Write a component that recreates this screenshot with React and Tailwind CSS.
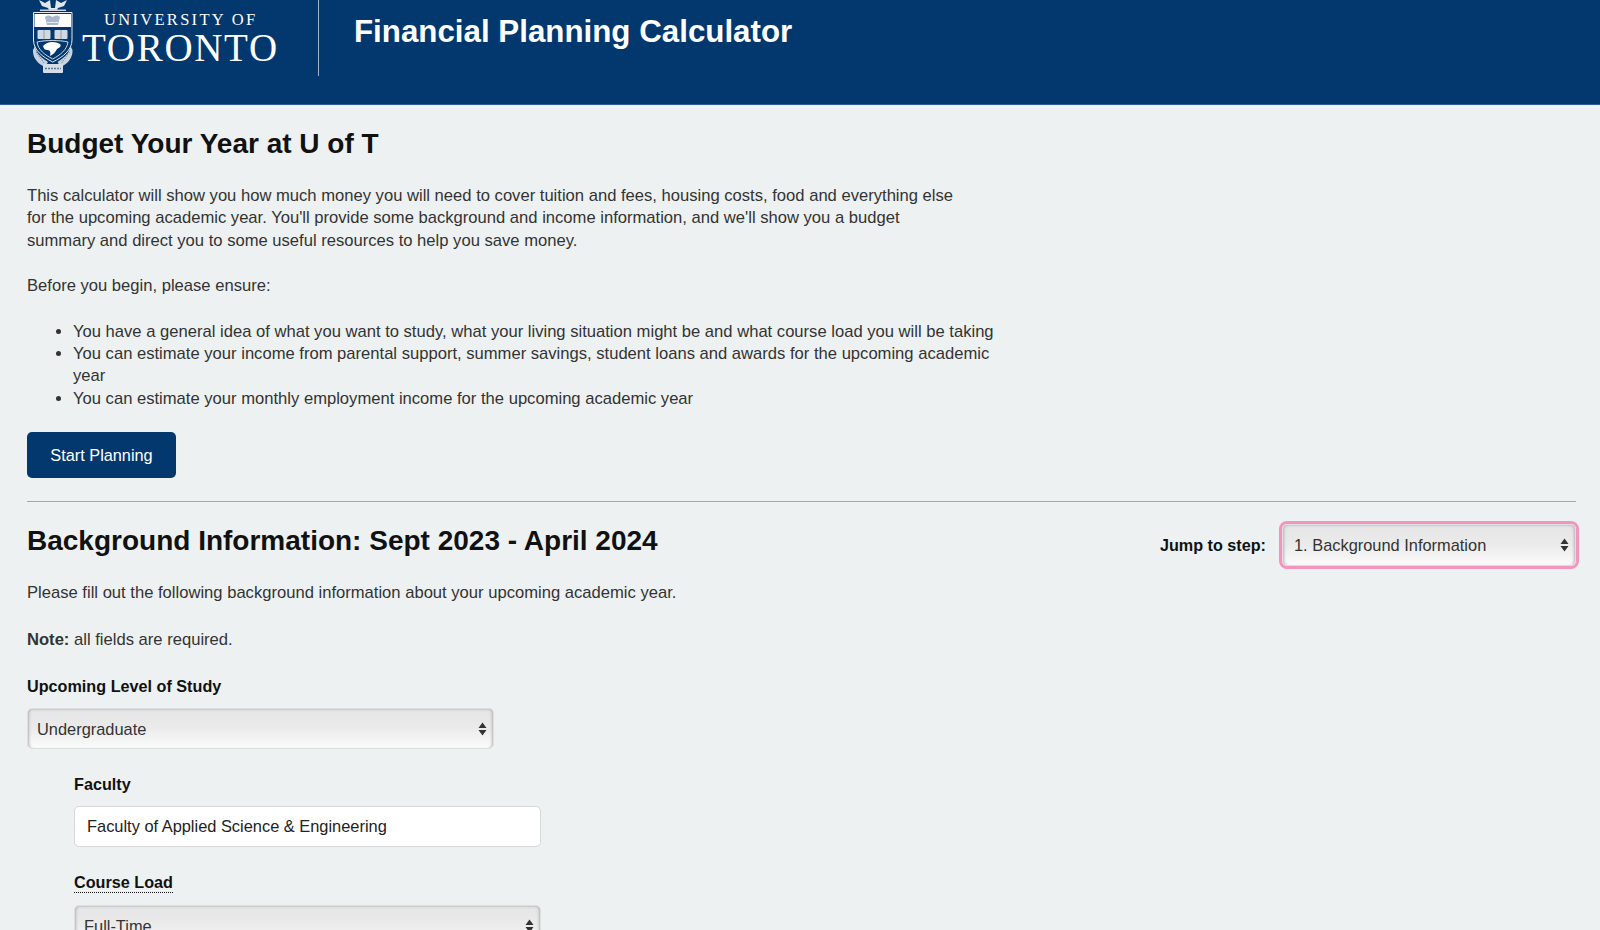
import React from "react";

// U of T crest, simplified
const Crest = () => (
  <svg width="40" height="74" viewBox="0 0 40 74" className="shrink-0">
    {/* tree on top */}
    <path d="M6 0 L12 3 L17 0 L18 8 L22 8 L23 0 L28 3 L34 0 L31 6 L25 8 L24 10 L16 10 L15 8 L9 6 Z" fill="#dfe6ee" />
    <rect x="7" y="9.500" width="26" height="1.500" fill="#c7d2df" />
    {/* shield */}
    <path d="M0.500 12.500 H39 V40 C39 50 30 57 19.750 62 C9.500 57 0.500 50 0.500 40 Z" fill="#03386e" stroke="#e4e9f0" strokeWidth="1" />
    <rect x="1.500" y="14" width="36.500" height="13" fill="#ffffff" />
    {/* crown */}
    <path d="M12 17 C14 15 17 15 19.500 17 C22 15 25 15 27 17 L25 25 H14 Z" fill="#a9b9cb" />
    <path d="M14 22.500 H25" stroke="#ffffff" strokeWidth="0.700" />
    {/* books */}
    <rect x="4.500" y="30" width="13" height="9" rx="1" fill="#cfd8e3" />
    <rect x="21.500" y="30" width="13" height="9" rx="1" fill="#cfd8e3" />
    <path d="M11 30 V39 M28 30 V39" stroke="#7d93ac" strokeWidth="0.800" />
    {/* lower field with beaver */}
    <path d="M4 42 C12 40 27 40 35 42 C34 50 27 55 19.750 59 C12 55 5 50 4 42 Z" fill="#03386e" stroke="#ffffff" strokeWidth="0.800" />
    <path d="M10 46 C14 41 22 41 27 44 C29 46 26 48 24 49 C22 53 19 55 17 56 C18 52 17 50 14 50 C12 50 11 49 10 46 Z" fill="#ffffff" />
    {/* ribbon and motto */}
    <path d="M2 46 C3 54 9 58 15 62 L12 67 C5 64 -0.500 58 0 50 Z" fill="#c9d3df" />
    <path d="M37.500 46 C36.500 54 30.500 58 24.500 62 L27.500 67 C34.500 64 40 58 39.500 50 Z" fill="#c9d3df" />
    <path d="M3 52 L11 63 M36.500 52 L28.500 63" stroke="#6f88a4" strokeWidth="1" strokeDasharray="1.500 1" />
    <rect x="10" y="64" width="20" height="9" rx="1" fill="#d5dde6" />
    <path d="M12 68.500 H28" stroke="#5f7b99" strokeWidth="1.500" strokeDasharray="2 1" />
  </svg>
);

const Arrows = () => (
  <svg width="9" height="14" viewBox="0 0 9 14" className="absolute right-[7px] top-1/2 -translate-y-1/2 pointer-events-none">
    <path d="M4.500 0.500 L8.500 6 H0.500 Z M4.500 13.500 L0.500 8 H8.500 Z" fill="#333333" />
  </svg>
);

// select with the old gray gradient look
const SelectBox = ({ value, className, padding }) => (
  <div className={`relative ${className}`}>
    <select
      defaultValue={value}
      className={`appearance-none w-full h-full ${padding} text-[16.400px] text-[#333] rounded-[5px] border border-[#dcdedf] bg-gradient-to-b from-[#e5e5e5] via-[#ebebeb] to-[#fbfbfb] shadow-[inset_3px_0_3px_-2px_#b5b5b5,inset_-3px_0_3px_-2px_#b5b5b5,inset_0_2px_2px_-1px_#c8c8c8] outline-none`}
    >
      <option>{value}</option>
    </select>
    <Arrows />
  </div>
);

const App = () => {
  return (
    <div className="h-screen overflow-hidden bg-[#edf1f2] font-['Liberation_Sans',Arial,sans-serif] text-[16.600px] leading-[22.400px] text-[#333]">
      {/* Header */}
      <header className="h-[105px] bg-[#03386e] border-b border-[#2c5c8e] flex items-start overflow-hidden">
        <div className="w-[319px] h-[76px] flex pl-[33px] shrink-0 border-r border-[#a4b3c5]">
          <Crest />
          <div className="ml-[10px] text-white font-['Liberation_Serif',serif] leading-none">
            <div className="mt-[12px] ml-[21px] text-[16.500px] tracking-[2.300px] whitespace-nowrap">UNIVERSITY OF</div>
            <div className="-ml-[1px] text-[39px] leading-[38px] tracking-[1.700px] whitespace-nowrap">TORONTO</div>
          </div>
        </div>
        <h1 className="ml-[35px] mt-[13px] text-[31.300px] leading-[38px] font-bold text-white">Financial Planning Calculator</h1>
      </header>

      <main className="pl-[27px] pr-[24px] pt-[21px]">
        <h2 className="text-[28px] leading-[36px] font-bold text-[#111]">Budget Your Year at U of T</h2>
        <p className="mt-[23px] w-[940px]">
          This calculator will show you how much money you will need to cover tuition and fees, housing costs, food and everything else for the upcoming academic year. You'll provide some background and income information, and we'll show you a budget summary and direct you to some useful resources to help you save money.
        </p>
        <p className="mt-[23px]">Before you begin, please ensure:</p>
        <ul className="mt-[23px] w-[970px] list-disc pl-[46px]">
          <li>You have a general idea of what you want to study, what your living situation might be and what course load you will be taking</li>
          <li>You can estimate your income from parental support, summer savings, student loans and awards for the upcoming academic year</li>
          <li>You can estimate your monthly employment income for the upcoming academic year</li>
        </ul>
        <button className="mt-[22px] w-[149px] h-[46px] rounded-[5px] bg-[#03386e] text-white text-[16.300px]">Start Planning</button>
        <hr className="mt-[23px] border-t border-[#a5a8aa]" />

        <div className="mt-[21px] flex justify-between items-start">
          <h2 className="text-[28px] leading-[36px] font-bold text-[#111]">Background Information: Sept 2023 - April 2024</h2>
          <div className="flex items-center -mr-[3px] -mt-[2px]">
            <label className="font-bold text-[16.200px] text-[#111] mr-[13px]">Jump to step:</label>
            <SelectBox
              value="1. Background Information"
              padding="pl-[11px] pr-[24px]"
              className="w-[300px] h-[48px] rounded-[8px] border-[3px] border-[#f296bd]"
            />
          </div>
        </div>

        <p className="mt-[13px]">Please fill out the following background information about your upcoming academic year.</p>
        <p className="mt-[24px]"><strong className="font-bold">Note:</strong> all fields are required.</p>

        <label className="block mt-[24px] font-bold text-[16.200px] text-[#111]">Upcoming Level of Study</label>
        <SelectBox value="Undergraduate" padding="pl-[9px] pr-[24px]" className="mt-[11px] w-[467px] h-[41px]" />

        <div className="ml-[47px]">
          <label className="block mt-[24px] font-bold text-[16.200px] text-[#111]">Faculty</label>
          <input
            readOnly
            value="Faculty of Applied Science & Engineering"
            className="block mt-[10px] w-[467px] h-[41px] px-[12px] bg-white border border-[#d6d8da] rounded-[5px] text-[16.400px] text-[#222] outline-none"
          />
          <label className="inline-block mt-[25px] leading-[20px] font-bold text-[16.200px] text-[#111] border-b border-dotted border-[#111]">Course Load</label>
          <SelectBox value="Full-Time" padding="pl-[9px] pr-[24px]" className="mt-[11px] w-[467px] h-[41px]" />
        </div>
      </main>
    </div>
  );
};

export default App;
